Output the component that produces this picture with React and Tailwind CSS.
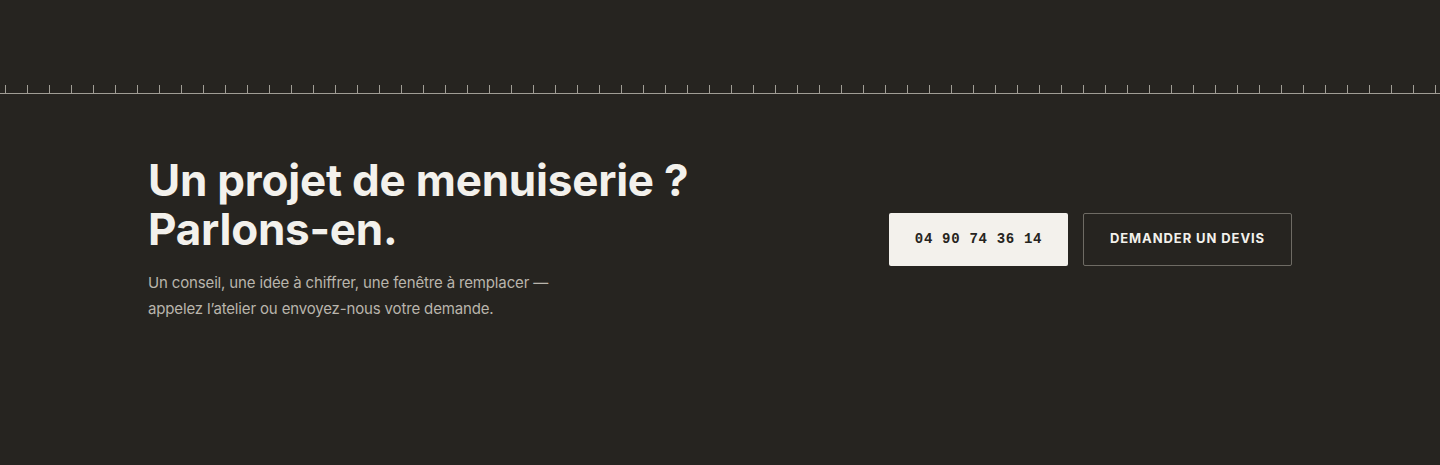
const ContactBand = () => {
  return (
    <section className="min-h-[465px] w-full bg-[#262420] pt-[85px] font-['Inter',sans-serif]">
      {/* graduated ruler */}
      <div className="h-[9px] w-full border-b border-[#a09d95] bg-[repeating-linear-gradient(90deg,transparent_0_5px,#a09d95_5px_6px,transparent_6px_22px)]" />

      <div className="mx-auto flex w-[1144px] items-center justify-between pt-[62px]">
        <div>
          <h2 className="text-[44px] font-bold leading-[49px] tracking-[-0.005em] text-[#f3f1ec]">
            Un projet de menuiserie ?
            <br />
            Parlons-en.
          </h2>
          <p className="mt-[16px] text-[15px] leading-[26px] tracking-[-0.01em] text-[#b9b5ac]">
            Un conseil, une idée à chiffrer, une fenêtre à remplacer —
            <br />
            appelez l’atelier ou envoyez-nous votre demande.
          </p>
        </div>

        <div className="flex items-center gap-[15px]">
          <a
            href="tel:0490743614"
            className="flex h-[53px] w-[179px] items-center justify-center rounded-[2px] bg-[#f3f1ec] font-['Liberation_Mono',monospace] text-[14px] font-bold tracking-[0.05em] text-[#262420]"
          >
            04 90 74 36 14
          </a>
          <a
            href="#devis"
            className="flex h-[53px] w-[209px] items-center justify-center rounded-[2px] border border-[#6e6b64] text-[13px] font-bold tracking-[0.07em] text-[#f3f1ec]"
          >
            DEMANDER UN DEVIS
          </a>
        </div>
      </div>
    </section>
  );
};

export default function App() {
  return <ContactBand />;
}
